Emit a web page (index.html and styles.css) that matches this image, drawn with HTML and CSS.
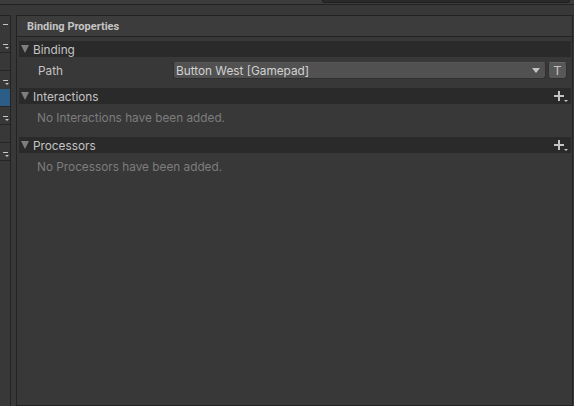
FILE: index.html
```html
<!DOCTYPE html>
<html lang="en">
<head>
    <meta charset="UTF-8">
    <meta name="viewport" content="width=device-width, initial-scale=1.0">
    <title>Binding Properties</title>
    <link rel="stylesheet" href="styles.css">
</head>
<body>

    <div class="toolbar">
        <div class="search-field"></div>
    </div>

    <div class="main">
        <div class="sidebar">
            <div class="side-row tall"><span class="side-icon"></span></div>
            <div class="side-row sep"><span class="side-icon drop"></span></div>
            <div class="side-row sep"></div>
            <div class="side-row"><span class="side-icon drop"></span></div>
            <div class="side-row selected"></div>
            <div class="side-row sep"><span class="side-icon drop"></span></div>
            <div class="side-row sep"></div>
            <div class="side-row sep"><span class="side-icon drop"></span></div>
        </div>

        <div class="panel">
            <div class="panel-header">Binding Properties</div>

            <div class="panel-body">
                <div class="section">
                    <div class="foldout">
                        <span class="arrow"></span>
                        <span class="foldout-label">Binding</span>
                    </div>
                    <div class="section-body">
                        <div class="field-row">
                            <span class="field-label">Path</span>
                            <div class="dropdown">
                                <span>Button West [Gamepad]</span>
                                <span class="dropdown-arrow"></span>
                            </div>
                            <button class="t-button">T</button>
                        </div>
                    </div>
                </div>

                <div class="section">
                    <div class="foldout">
                        <span class="arrow"></span>
                        <span class="foldout-label">Interactions</span>
                        <svg class="add-icon" width="14" height="12" viewBox="0 0 14 12">
                            <rect x="4" y="0" width="2" height="10" fill="#c4c4c4"/>
                            <rect x="0" y="4" width="10" height="2" fill="#c4c4c4"/>
                            <polygon points="10,9 14,9 12,11" fill="#c4c4c4"/>
                        </svg>
                    </div>
                    <div class="section-body">
                        <div class="empty-message">No Interactions have been added.</div>
                    </div>
                </div>

                <div class="section">
                    <div class="foldout">
                        <span class="arrow"></span>
                        <span class="foldout-label">Processors</span>
                        <svg class="add-icon" width="14" height="12" viewBox="0 0 14 12">
                            <rect x="4" y="0" width="2" height="10" fill="#c4c4c4"/>
                            <rect x="0" y="4" width="10" height="2" fill="#c4c4c4"/>
                            <polygon points="10,9 14,9 12,11" fill="#c4c4c4"/>
                        </svg>
                    </div>
                    <div class="section-body">
                        <div class="empty-message">No Processors have been added.</div>
                    </div>
                </div>
            </div>
        </div>
    </div>

</body>
</html>
```

FILE: styles.css
```css
* {
    box-sizing: border-box;
}

html, body {
    height: 100%;
}

body {
    margin: 0;
    background-color: #383838;
    font-family: Inter, "Noto Sans", sans-serif;
    font-size: 11.8px;
    color: #c4c4c4;
    display: flex;
    flex-direction: column;
    overflow: hidden;
}

.toolbar {
    height: 5px;
    background-color: #3c3c3c;
    border-bottom: 1px solid #232323;
    display: flex;
    justify-content: flex-end;
    padding-right: 4px;
}

.search-field {
    width: 248px;
    height: 3px;
    background-color: #2a2a2a;
    border: 1px solid #202020;
    border-top: none;
    border-radius: 0 0 3px 3px;
}

.main {
    flex: 1;
    display: flex;
    gap: 5px;
    padding-top: 10px;
    padding-right: 1px;
}

.sidebar {
    width: 11px;
    border-right: 1px solid #232323;
    border-top: 1px solid #232323;
}

.side-row {
    height: 18px;
    position: relative;
}

.side-row.tall {
    height: 19px;
}

.side-row.sep {
    border-bottom: 1px solid #262626;
}

.side-row.selected {
    background-color: #2c5d87;
    border-bottom: 1px solid #262626;
}

.side-icon {
    position: absolute;
    right: 2px;
    top: 8px;
    width: 5px;
    height: 1px;
    background-color: #c4c4c4;
}

.side-icon.drop {
    top: 9px;
}

.side-icon.drop::after {
    content: "";
    position: absolute;
    right: -1px;
    top: 3px;
    border-left: 2px solid transparent;
    border-right: 2px solid transparent;
    border-top: 2px solid #c4c4c4;
}

.panel {
    flex: 1;
    border: 1px solid #232323;
    display: flex;
    flex-direction: column;
}

.panel-header {
    height: 21px;
    background-color: #3c3c3c;
    border-bottom: 1px solid #232323;
    padding: 1px 0 0 10px;
    font-family: Roboto, "Noto Sans", sans-serif;
    font-size: 11px;
    font-weight: bold;
    line-height: 19px;
}

.panel-body {
    padding: 4px 1px 0 2px;
}

.foldout {
    height: 16px;
    background-color: #2a2a2a;
    display: flex;
    align-items: center;
    padding-left: 2px;
}

.arrow {
    width: 0;
    height: 0;
    border-left: 4px solid transparent;
    border-right: 4px solid transparent;
    border-top: 8px solid #7e7e7e;
    margin-right: 4px;
}

.foldout-label {
    flex: 1;
    padding-top: 1px;
}

.add-icon {
    margin-right: 3px;
    margin-top: 2px;
}

.section-body {
    padding: 5px 0 9px;
}

.field-row {
    display: flex;
    align-items: center;
    gap: 2px;
    padding-left: 19px;
    padding-right: 4px;
}

.field-label {
    width: 133px;
}

.dropdown {
    flex: 1;
    height: 17px;
    background-color: #515151;
    border: 1px solid #303030;
    border-top-color: #585858;
    border-radius: 3px;
    display: flex;
    align-items: center;
    justify-content: space-between;
    padding: 0 5px 0 2px;
    color: #d2d2d2;
}

.dropdown-arrow {
    width: 0;
    height: 0;
    border-left: 4px solid transparent;
    border-right: 4px solid transparent;
    border-top: 5px solid #c4c4c4;
}

.t-button {
    width: 19px;
    height: 17px;
    padding: 0;
    background-color: #585858;
    border: 1px solid #303030;
    border-top-color: #656565;
    border-radius: 3px;
    color: #c4c4c4;
    font-family: Roboto, "Noto Sans", sans-serif;
    font-size: 13px;
    line-height: 14px;
}

.empty-message {
    height: 19px;
    line-height: 19px;
    padding-left: 18px;
    color: #7d7d7d;
}
```
